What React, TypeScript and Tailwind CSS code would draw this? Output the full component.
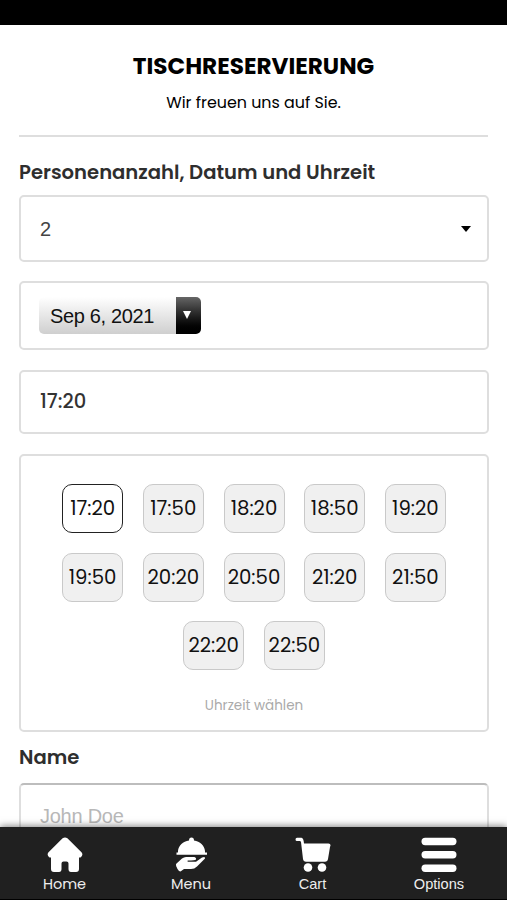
import type { ReactNode } from "react";

const slots = ["17:20", "17:50", "18:20", "18:50", "19:20", "19:50", "20:20", "20:50", "21:20", "21:50", "22:20", "22:50"];

function Slot({ time, active }: { time: string; active: boolean }) {
  return (
    <button
      className={
        "flex h-[49px] w-[61px] items-center justify-center rounded-[10px] border pt-px text-[19.7px] whitespace-nowrap text-[#111] " +
        (active ? "border-[#222] bg-white" : "border-[#c9c9c9] bg-[#f0f0f0]")
      }
    >
      {time}
    </button>
  );
}

function NavItem({ label, className, children }: { label: string; className: string; children: ReactNode }) {
  return (
    <a className={"flex flex-col items-center leading-[20px] text-[#eee] " + className}>
      <svg viewBox="0 0 36 36" className="h-9 w-9 fill-white">{children}</svg>
      <span className="mt-px">{label}</span>
    </a>
  );
}

export default function App() {
  return (
    <div className="relative h-[900px] w-[507px] overflow-hidden bg-white font-[Poppins,Inter,sans-serif] text-black">
      <div className="h-[25px] bg-black" />
      <main className="flex flex-col px-[19px]">
        <header className="h-[112px] border-b-2 border-[#dedede] pt-[26px] text-center">
          <h1 className="text-[23.15px] leading-[30px] font-bold">TISCHRESERVIERUNG</h1>
          <p className="mt-[10px] text-[15.9px] leading-6">Wir freuen uns auf Sie.</p>
        </header>
        <h2 className="mt-[20px] text-[19.6px] leading-[30px] font-semibold text-[#2e2e2e]">Personenanzahl, Datum und Uhrzeit</h2>
        <div className="mt-[8px] flex h-[67px] w-[470px] items-center justify-between rounded-[5px] border-2 border-[#dedede] pr-[16px] pl-[19px] font-['Liberation_Sans',sans-serif] text-[20px] text-[#444]">
          2
          <svg viewBox="0 0 10 6" className="h-[6px] w-[10px]"><path d="M0 0h10L5 6Z" /></svg>
        </div>
        <div className="mt-[19px] flex h-[69px] w-[470px] items-center rounded-[5px] border-2 border-[#dedede] pl-[18px]">
          <div className="flex h-[37px] w-[162px] overflow-hidden rounded-[5px]">
            <span className="flex flex-1 items-center bg-linear-to-b from-white to-[#cfcfcf] pl-[11px] font-['Liberation_Sans',sans-serif] text-[20px] tracking-[-0.35px] text-[#111]">Sep 6, 2021</span>
            <span className="flex w-[25px] justify-center bg-linear-to-b from-[#666] to-black pt-[14px] pr-[3px]">
              <svg viewBox="0 0 8 8" className="h-2 w-2 fill-white"><path d="M0 0h8L4 8Z" /></svg>
            </span>
          </div>
        </div>
        <div className="mt-[20px] flex h-[64px] w-[470px] items-center rounded-[5px] border-2 border-[#dedede] pl-[19px] text-[19.5px] font-medium text-[#333]">17:20</div>
        <section className="mt-[20px] flex h-[278px] w-[470px] flex-col items-center rounded-[5px] border-2 border-[#dedede] pt-[28px]">
          <div className="flex w-[400px] flex-wrap justify-center gap-x-[19.7px] gap-y-[19.5px]">
            {slots.map((time, i) => <Slot key={time} time={time} active={i === 0} />)}
          </div>
          <p className="mt-[26px] text-[13.5px] leading-5 text-[#aaa]">Uhrzeit wählen</p>
        </section>
        <h2 className="mt-[10px] text-[19.6px] leading-[30px] font-semibold text-[#2e2e2e]">Name</h2>
        <div className="mt-[11px] h-[66px] w-[470px] rounded-[5px] border-2 border-[#dedede] border-t-[#bdbdbd] pt-[19px] pl-[19px] font-['Liberation_Sans',sans-serif] text-[20px] leading-6 tracking-[-0.25px] text-[#b8b8b8]">John Doe</div>
      </main>
      <nav className="absolute inset-x-0 bottom-0 flex h-[73px] border-b border-black bg-[#202020] pt-[10px] shadow-[0_-1px_7px_rgba(0,0,0,0.5)]">
        <NavItem label="Home" className="ml-[24.5px] w-20 text-[14.500px]">
          <path d="M15.6 1.3Q18 -.3 20.4 1.3L34.700 15.500Q36.500 18.500 33.500 20.500H32V32Q32 35 29 35H24Q21.500 35 21.500 32V26.500Q21.500 24.500 19.500 24.500H16.500Q14.500 24.500 14.500 26.500V32Q14.500 35 12 35H7Q4 35 4 32V20.500H2.500Q-.5 18.500 1.3 15.500Z" />
        </NavItem>
        <NavItem label="Menu" className="ml-[46.5px] w-20 text-[14.500px]">
          <path d="M5 14C5.500 8.500 10 4.500 16 3.500Q16 .500 18.500 .500Q21 .500 21 3.500C27 4.500 31.500 8.500 32 14V15.500H34V17.800H3.500V15.500H5Z" />
          <path d="M3 27L9 21.500Q11 20 13 20H21Q23.500 20.500 23 22.500Q22 23.500 15 23.500Q13.500 24 15 24.800H23L29 20.500Q32.500 19 32 21.500L24 29.500Q21.500 32 18 32H11L7.500 34.500Q6 34.500 4.500 32Q2.500 29 3 27Z" />
        </NavItem>
        <NavItem label="Cart" className="ml-[41.5px] w-20 font-['Liberation_Sans',sans-serif] text-[14.6px]">
          <path d="M1 .800H6.500Q8.500 1 9 6.500H33.500Q36.500 7 35 10L33 22Q32.500 24.800 30 24.800H11Q8.500 24.800 8 22L6 5Q5.800 4 4.500 4H2Q.500 4 .500 2.500Q.500 1 2 .800Z" />
          <circle cx="13" cy="30.500" r="4.300" /><circle cx="27" cy="30.500" r="4.300" />
        </NavItem>
        <NavItem label="Options" className="ml-[46.5px] w-20 font-['Liberation_Sans',sans-serif] text-[14.6px]">
          <rect x=".5" y=".7" width="35" height="7.500" rx="3.700" />
          <rect x=".5" y="14" width="35" height="7.500" rx="3.700" />
          <rect x=".5" y="27.500" width="35" height="7.500" rx="3.700" />
        </NavItem>
      </nav>
    </div>
  );
}
